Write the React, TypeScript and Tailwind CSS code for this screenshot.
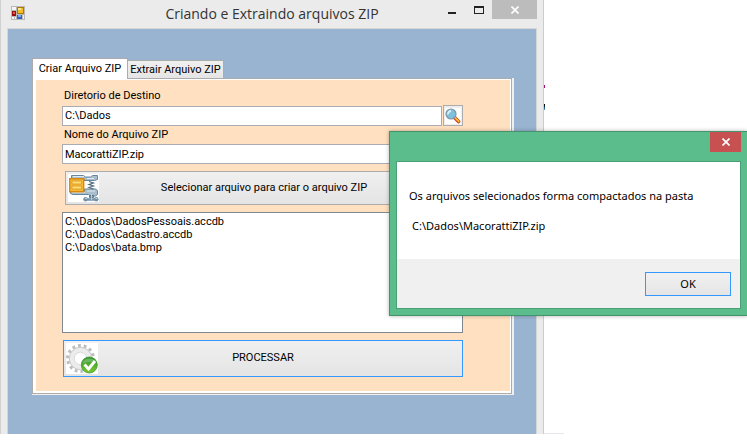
import React, { useState } from "react";

const files = [
  "C:\\Dados\\DadosPessoais.accdb",
  "C:\\Dados\\Cadastro.accdb",
  "C:\\Dados\\bata.bmp",
];

const FormIcon = () => (
  <svg viewBox="0 0 14 14" className="h-[14px] w-[14px]" aria-hidden="true">
    <path fill="#b9b9b9" d="M0 0h14v14H0z" />
    <path fill="#f4f4f4" d="M1 1h4v3H1zM1 11h2v2H1zM4 11h1v2H4zM12 9h1v4h-1z" />
    <path fill="#9a1010" d="M1 5h4v5H1z" />
    <path fill="#e05a48" d="M2 6h2v2H2z" />
    <path fill="#b07a00" d="M6 1h7v7H6z" />
    <path fill="#f5bd22" d="M7 2h5v5H7z" />
    <path fill="#ffe68a" d="M7 2h3v2H7z" />
    <path fill="#2d62c8" d="M6 9h5v4H6z" />
    <path fill="#7eaaf2" d="M7 9h3v2H7z" />
  </svg>
);

const SearchIcon = () => (
  <svg viewBox="0 0 16 16" className="h-4 w-4" aria-hidden="true">
    <path fill="#fff" d="M0 0h16v16H0z" />
    <path d="M9.500 9.500l4 4" stroke="#c8432a" strokeWidth="3.800" strokeLinecap="round" />
    <path d="M9.500 9.200l4.300 4.200" stroke="#ffb52e" strokeWidth="1.800" strokeLinecap="round" />
    <circle cx="6" cy="6" r="5" fill="#7fc0dd" stroke="#7d95a5" strokeWidth="1.200" />
    <path d="M3 6.500a3 3 0 0 1 3-3.500" fill="none" stroke="#d8f1fa" strokeWidth="1.800" />
  </svg>
);

const ZipIcon = () => (
  <svg viewBox="0 0 31 28" className="h-[28px] w-[31px]" aria-hidden="true">
    <path fill="#fff" d="M0 0h31v28H0z" />
    <path
      fill="#a9bfce"
      stroke="#66859c"
      d="M3.500 1.500h12l2 1.500h5l2-1.500h5v4l-3 1H16v-2H3.500zM2.500 17.500h14v-2.500h11l2 1.500v4l-2 1.500h-5l-2-1.500H5l-2.500-1z"
    />
    <path d="M5 2.500h11M19 4.500h7M4 18.500h13M19 17h8" stroke="#dce9f1" />
    <path
      d="M21 7.500l4.500 1.500-4.500 1.500 4.500 1.500-4.500 1.500 4.500 1.500"
      fill="none"
      stroke="#526b7c"
      strokeWidth="1.200"
    />
    <path fill="#7f9db2" stroke="#59788e" d="M21.500 21.500h4v2h-4z" />
    <path d="M17.500 25.500h11" stroke="#7592a7" strokeWidth="2.500" />
    <circle cx="17.500" cy="25.300" r="2.200" fill="#7592a7" />
    <circle cx="28.300" cy="25.300" r="2.200" fill="#7592a7" />
    <path d="M23.500 20v6M17 24.500h2M27.500 24.500h2" stroke="#b9cddb" />
    <path fill="#f7b733" stroke="#d78a13" strokeWidth="1.400" d="M1.700 4.700h14v13h-14z" />
    <path
      fill="#ffdc72"
      stroke="#d99a2b"
      strokeWidth=".8"
      d="M4 7h9.500v3H4zM4 12h9.500v3H4z"
    />
  </svg>
);

const GearIcon = () => (
  <svg viewBox="0 0 32 31" className="h-[31px] w-[32px]" aria-hidden="true">
    <defs>
      <linearGradient id="ok" x1="0" y1="0" x2="0" y2="1">
        <stop offset="0" stopColor="#2f8f2a" />
        <stop offset="1" stopColor="#7ccb2e" />
      </linearGradient>
    </defs>
    <path fill="#fff" d="M0 0h32v31H0z" />
    <circle
      cx="14.500"
      cy="15.500"
      r="12.700"
      fill="none"
      stroke="#bdbdbd"
      strokeWidth="3.400"
      strokeDasharray="2.800 2.900"
    />
    <circle cx="14.500" cy="15.500" r="9" fill="none" stroke="#ececec" strokeWidth="5" />
    <circle cx="14.500" cy="15.500" r="11.200" fill="none" stroke="#b0b0b0" strokeWidth=".6" />
    <circle cx="14.500" cy="15.500" r="6.300" fill="#fff" stroke="#cfcfcf" strokeWidth=".8" />
    <circle cx="23.300" cy="22" r="8" fill="url(#ok)" stroke="#3b9a2c" strokeWidth=".8" />
    <path d="M16.500 20.500a7 6.500 0 0 1 13.600 0q-7-3-13.600 0z" fill="#8cc98a" opacity=".55" />
    <path d="M18.500 21.500l4 4.500 6.500-8" fill="none" stroke="#fff" strokeWidth="2.800" />
  </svg>
);

const CloseIcon = () => (
  <svg viewBox="0 0 8 8" className="h-2 w-2" aria-hidden="true">
    <path d="M.5.5l7 7M7.500.5l-7 7" stroke="#fff" strokeWidth="1.700" />
  </svg>
);

interface ActionButtonProps {
  icon: React.ReactNode;
  label: string;
  className: string;
}

const ActionButton: React.FC<ActionButtonProps> = ({ icon, label, className }) => (
  <button
    type="button"
    className={`grid grid-cols-[32px_1fr_32px] items-center border bg-linear-to-b from-[#f0f0f0] to-[#e4e4e4] px-[2px] ${className}`}
  >
    {icon}
    <span>{label}</span>
  </button>
);

const MainWindow = () => {
  const [folder, setFolder] = useState("C:\\Dados");
  const [zipName, setZipName] = useState("MacorattiZIP.zip");

  return (
    <main className="mr-[203px] border-x border-l-[#d0d0d0] border-r-[#cccccc] bg-[#ebebeb] px-[6px]">
      {/* Title bar */}
      <header className="grid h-7 grid-cols-[1fr_auto_1fr] items-start">
        <div className="pt-[6px] pl-1">
          <FormIcon />
        </div>
        <h1 className="pt-1 font-['Open_Sans',sans-serif] text-[14px] leading-5 text-[#333]">
          Criando e Extraindo arquivos ZIP
        </h1>
        <div className="flex justify-end">
          <button type="button" aria-label="Minimizar" className="flex h-[19px] w-[26px] items-center justify-center">
            <svg viewBox="0 0 8 10" className="h-[10px] w-2" aria-hidden="true">
              <path fill="#222" d="M0 7h8v2H0z" />
            </svg>
          </button>
          <button type="button" aria-label="Maximizar" className="flex h-[19px] w-[27px] items-center justify-center">
            <svg viewBox="0 0 10 8" className="h-2 w-[10px]" aria-hidden="true">
              <path fill="#222" fillRule="evenodd" d="M0 0h10v8H0zM1 2v5h8V2z" />
            </svg>
          </button>
          <button type="button" aria-label="Fechar" className="flex h-[19px] w-[45px] items-center justify-center bg-[#bcbcbc]">
            <CloseIcon />
          </button>
        </div>
      </header>

      {/* Client area */}
      <div className="border border-b-0 border-[#d6d6d6] bg-[#99b4d1] pt-[29px] pr-[22px] pb-[39px] pl-6">
        <div role="tablist" className="flex items-end whitespace-nowrap">
          <button
            type="button"
            role="tab"
            aria-selected="true"
            className="relative z-10 -mb-px h-[21px] w-24 border border-b-0 border-[#acacac] bg-white"
          >
            Criar Arquivo ZIP
          </button>
          <button
            type="button"
            role="tab"
            aria-selected="false"
            className="h-[18px] w-24 border border-b-0 border-l-0 border-[#acacac] bg-linear-to-b from-[#f0f0f0] to-[#e5e5e5] pt-px"
          >
            Extrair Arquivo ZIP
          </button>
        </div>

        <div className="bg-[#f0f0f0] pr-[2px] pb-px">
          <form className="border border-[#acacac] bg-white pt-px pr-px pb-[2px] pl-[3px]" onSubmit={(e) => e.preventDefault()}>
            <div className="flex flex-col bg-[#ffe0c0] pt-2 pr-[47px] pb-[14px] pl-[26px]">
              <label htmlFor="folder" className="pb-px pl-[2px] leading-4">
                Diretorio de Destino
              </label>
              <div className="flex items-center gap-px">
                <input
                  id="folder"
                  value={folder}
                  onChange={(e) => setFolder(e.target.value)}
                  className="h-5 min-w-0 flex-1 border border-[#ababb3] bg-white px-[2px]"
                />
                <button
                  type="button"
                  aria-label="Procurar"
                  className="flex h-[21px] w-5 items-center justify-center border border-[#acacac] bg-[#eee]"
                >
                  <SearchIcon />
                </button>
              </div>
              <label htmlFor="zip" className="pt-px pb-px pl-[2px] leading-4">
                Nome do Arquivo ZIP
              </label>
              <input
                id="zip"
                value={zipName}
                onChange={(e) => setZipName(e.target.value)}
                className="h-5 border border-[#ababb3] bg-white px-[2px]"
              />
              <ActionButton
                icon={<ZipIcon />}
                label="Selecionar arquivo para criar o arquivo ZIP"
                className="mt-[7px] ml-[3px] h-[34px] border-[#acacac]"
              />
              <select
                multiple
                aria-label="Arquivos selecionados"
                className="mt-[7px] h-[121px] overflow-hidden rounded-none border border-[#828790] bg-white p-[2px]"
              >
                {files.map((file) => (
                  <option key={file} className="h-[13px] min-h-[13px] p-0">
                    {file}
                  </option>
                ))}
              </select>
              <ActionButton
                icon={<GearIcon />}
                label="PROCESSAR"
                className="mt-[7px] ml-px h-[37px] border-[#3399ff]"
              />
            </div>
          </form>
        </div>
      </div>
    </main>
  );
};

const MessageDialog = () => (
  <div
    role="dialog"
    aria-label="Mensagem"
    className="absolute top-[131px] right-0 z-20 w-[358px] border border-r-0 border-[#43946d] bg-[#5cbd8c] pr-[6px] pb-[6px] pl-[6px] font-['Noto_Sans',sans-serif] text-[11px] shadow-[0_0_4px_rgba(0,0,0,0.3)]"
  >
    <div className="flex h-[29px] items-start justify-end">
      <button type="button" aria-label="Fechar" className="flex h-5 w-[31px] items-center justify-center bg-[#c75050]">
        <CloseIcon />
      </button>
    </div>
    <div className="border border-[#4a9f75] bg-white">
      <div className="h-[97px] px-3 pt-[26px] leading-[15px]">
        <p>Os arquivos selecionados forma compactados na pasta</p>
        <p className="pt-[15px] pl-[3px]">C:\Dados\MacorattiZIP.zip</p>
      </div>
      <div className="flex justify-end bg-[#f0f0f0] px-[9px] pt-[13px] pb-3">
        <button type="button" className="h-6 w-[86px] border border-[#3399ff] bg-linear-to-b from-[#f0f0f0] to-[#e5e5e5]">
          OK
        </button>
      </div>
    </div>
  </div>
);

const App = () => {
  return (
    <div className="relative min-h-screen overflow-hidden bg-white font-[Roboto,'Liberation_Sans',sans-serif] text-[11px] text-black">
      <MainWindow />
      {/* Slivers of the page behind the window */}
      <span className="absolute top-[85px] right-[202px] h-[3px] w-px bg-[#a0107a]" />
      <span className="absolute top-[104px] right-[202px] h-[6px] w-px bg-linear-to-b from-black to-[#4aa8e8]" />
      <span className="absolute top-[433px] right-[183px] h-px w-5 bg-[#e6e6f0]" />
      <MessageDialog />
    </div>
  );
};

export default App;
